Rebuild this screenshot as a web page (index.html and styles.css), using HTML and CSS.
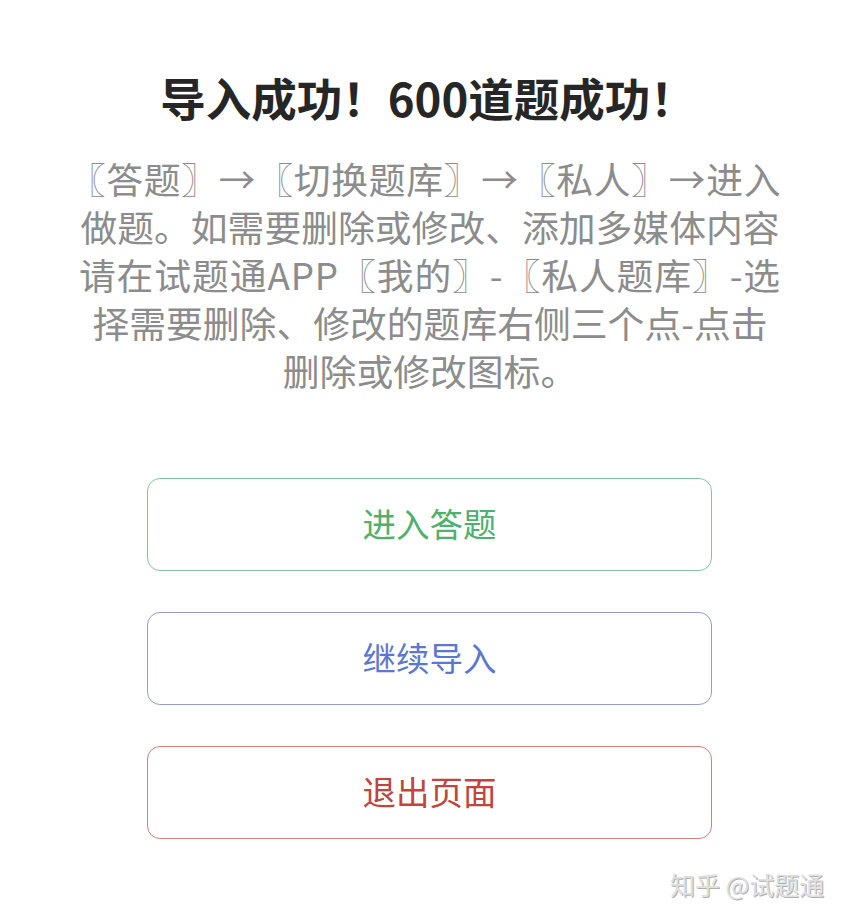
FILE: index.html
```html
<!DOCTYPE html>
<html lang="zh-CN">
<head>
<meta charset="utf-8">
<link rel="stylesheet" href="styles.css">
</head>
<body>
<div class="page">
  <h1 class="title">导入成功！600道题成功！</h1>
  <p class="desc"><span class="line wide1">〖答题〗→〖切换题库〗→〖私人〗→进入</span><span class="line">做题。如需要删除或修改、添加多媒体内容</span><span class="line wide3">请在试题通APP〖我的〗-〖私人题库〗-选</span><span class="line">择需要删除、修改的题库右侧三个点-点击</span><span class="line">删除或修改图标。</span></p>
  <div class="actions">
    <div class="btn btn-green">进入答题</div>
    <div class="btn btn-blue">继续导入</div>
    <div class="btn btn-red">退出页面</div>
  </div>
</div>
<div class="watermark">知乎 @试题通</div>
</body>
</html>
```
FILE: styles.css
```css
html, body {
  margin: 0;
  padding: 0;
  background: #ffffff;
}
body {
  font-family: "Noto Sans CJK SC", "Noto Sans", sans-serif;
  width: 847px;
  height: 920px;
  position: relative;
  overflow: hidden;
  text-spacing-trim: space-all;
}
.page {
  padding-top: 66px;
  display: flex;
  flex-direction: column;
}
.title {
  margin: 0;
  width: 700px;
  margin-left: 78px;
  text-align: center;
  font-size: 45.5px;
  line-height: 62px;
  font-weight: 700;
  color: #262626;
  white-space: nowrap;
}
.desc {
  margin: 26px 0 0 80px;
  width: 700px;
  display: flex;
  flex-direction: column;
  align-items: center;
  font-size: 36.8px;
  line-height: 48px;
  color: #8c8c8c;
  white-space: nowrap;
}
.line {
  display: block;
}
.wide1 {
  letter-spacing: 0.7px;
  margin-right: 10px;
}
.wide3 {
  letter-spacing: 0.9px;
}
.actions {
  margin: 84px 0 0 147px;
  width: 565px;
  display: flex;
  flex-direction: column;
  gap: 41px;
}
.btn {
  box-sizing: border-box;
  height: 93px;
  padding-bottom: 5px;
  border-radius: 13px;
  border: 1.5px solid;
  display: flex;
  align-items: center;
  justify-content: center;
  font-size: 33.5px;
}
.btn-green {
  border-color: #86c59b;
  color: #4fb06d;
}
.btn-blue {
  border-color: #929fcc;
  color: #5b77d0;
}
.btn-red {
  border-color: #d2807a;
  color: #c2443a;
}
.watermark {
  position: absolute;
  left: 670px;
  top: 867px;
  font-size: 25px;
  line-height: 34px;
  color: #e0e0e0;
  text-shadow: 1px 1px 0 #b0b0b0;
  white-space: nowrap;
}
```
